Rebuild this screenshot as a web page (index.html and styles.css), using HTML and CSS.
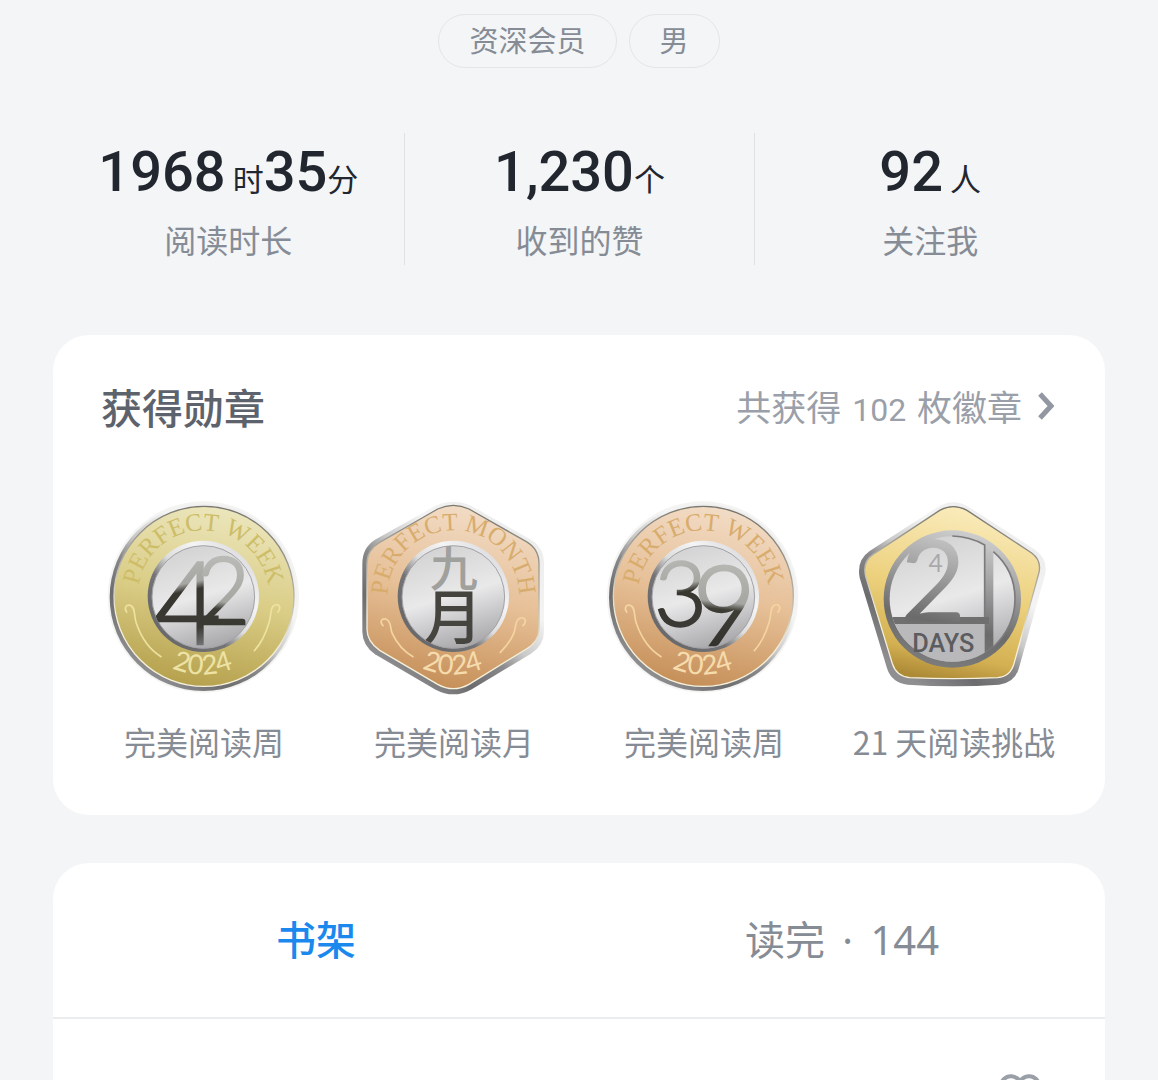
FILE: index.html
```html
<!DOCTYPE html>
<html lang="zh-CN">
<head>
    <meta charset="UTF-8">
    <meta name="viewport" content="width=device-width, initial-scale=1.0">
    <title>个人主页</title>
    <link rel="stylesheet" href="styles.css">
</head>
<body>
    <!-- Shared gradients for the medals -->
    <svg class="defs" width="0" height="0" aria-hidden="true">
        <defs>
            <linearGradient id="rim" x1="0.85" y1="0.1" x2="0.2" y2="0.9">
                <stop offset="0" stop-color="#ececec"/>
                <stop offset="0.3" stop-color="#f4f4f4"/>
                <stop offset="0.5" stop-color="#c9c9c9"/>
                <stop offset="0.62" stop-color="#8a8a8c"/>
                <stop offset="0.8" stop-color="#6c6c6e"/>
                <stop offset="1" stop-color="#8f8f91"/>
            </linearGradient>
            <linearGradient id="lip" x1="0.6" y1="0" x2="0.4" y2="1">
                <stop offset="0" stop-color="#77746c"/>
                <stop offset="0.4" stop-color="#b4b1a6"/>
                <stop offset="0.7" stop-color="#f3efd8"/>
                <stop offset="1" stop-color="#f6f2dc"/>
            </linearGradient>
            <linearGradient id="gold" x1="0.6" y1="0" x2="0.4" y2="1">
                <stop offset="0" stop-color="#ece6bd"/>
                <stop offset="0.5" stop-color="#dacd86"/>
                <stop offset="1" stop-color="#b5a04c"/>
            </linearGradient>
            <linearGradient id="copper" x1="0.6" y1="0" x2="0.4" y2="1">
                <stop offset="0" stop-color="#f2dcc6"/>
                <stop offset="0.5" stop-color="#e6bf96"/>
                <stop offset="1" stop-color="#c58e57"/>
            </linearGradient>
            <linearGradient id="amber" x1="0.6" y1="0" x2="0.4" y2="1">
                <stop offset="0" stop-color="#faecbd"/>
                <stop offset="0.5" stop-color="#ecd07c"/>
                <stop offset="0.85" stop-color="#d3b052"/>
                <stop offset="1" stop-color="#ad8a36"/>
            </linearGradient>
            <linearGradient id="innerRim" x1="0.9" y1="0.1" x2="0.2" y2="0.8">
                <stop offset="0" stop-color="#d9d9dc"/>
                <stop offset="0.3" stop-color="#f5f5f5"/>
                <stop offset="0.55" stop-color="#dedede"/>
                <stop offset="0.75" stop-color="#747476"/>
                <stop offset="1" stop-color="#6a6a6c"/>
            </linearGradient>
            <linearGradient id="silver" x1="0.3" y1="0" x2="0.6" y2="1">
                <stop offset="0" stop-color="#d2d2d3"/>
                <stop offset="0.5" stop-color="#e9e9ea"/>
                <stop offset="1" stop-color="#a7a7aa"/>
            </linearGradient>
            <linearGradient id="steel" gradientUnits="userSpaceOnUse" x1="400" y1="140" x2="300" y2="540">
                <stop offset="0" stop-color="#cfcfd0"/>
                <stop offset="0.35" stop-color="#a0a0a1"/>
                <stop offset="0.7" stop-color="#6b6b6c"/>
                <stop offset="1" stop-color="#7b7b7c"/>
            </linearGradient>
            <linearGradient id="ink" gradientUnits="userSpaceOnUse" x1="300" y1="200" x2="360" y2="480">
                <stop offset="0" stop-color="#b9b9b6"/>
                <stop offset="0.32" stop-color="#a6a6a2"/>
                <stop offset="0.4" stop-color="#37362f"/>
                <stop offset="0.8" stop-color="#3b3a35"/>
                <stop offset="1" stop-color="#77777a"/>
            </linearGradient>
            <linearGradient id="inkLight" gradientUnits="userSpaceOnUse" x1="420" y1="200" x2="390" y2="480">
                <stop offset="0" stop-color="#bcbcb8"/>
                <stop offset="0.54" stop-color="#a5a5a1"/>
                <stop offset="0.62" stop-color="#3d3c35"/>
                <stop offset="1" stop-color="#33322d"/>
            </linearGradient>
            <path id="arcTop" d="M160 406 A197 197 0 1 1 526 406"/>
            <path id="arcBottom" d="M108 370 A236 236 0 0 0 574 370"/>
            <clipPath id="disc"><circle cx="343" cy="336" r="154"/></clipPath>
            <clipPath id="dayDisc"><circle cx="340" cy="342" r="188"/></clipPath>
            <g id="core">
                <circle cx="343" cy="334" r="167" fill="url(#innerRim)"/>
                <circle cx="343" cy="336" r="154" fill="url(#silver)" stroke="#a2a2a8" stroke-width="3"/>
            </g>
            <g id="scroll" fill="none" stroke-width="5" stroke-linecap="round">
                <path d="M113 381 C104 368 112 358 124 361 C140 366 134 392 142 415 C156 456 178 492 216 515"/>
                <path d="M567 381 C578 368 570 356 558 360 C542 365 548 390 540 413 C530 447 516 475 496 497"/>
            </g>
        </defs>
    </svg>

    <main class="page">
        <div class="tags">
            <span class="tag">资深会员</span>
            <span class="tag">男</span>
        </div>

        <section class="stats">
            <div class="stat">
                <p class="stat-value">1968<span class="unit spaced">时</span>35<span class="unit">分</span></p>
                <p class="stat-label">阅读时长</p>
            </div>
            <div class="stat">
                <p class="stat-value">1,230<span class="unit">个</span></p>
                <p class="stat-label">收到的赞</p>
            </div>
            <div class="stat">
                <p class="stat-value">92<span class="unit spaced">人</span></p>
                <p class="stat-label">关注我</p>
            </div>
        </section>

        <section class="card medals">
            <div class="card-header">
                <h2>获得勋章</h2>
                <a class="more" href="#medals">
                    <span>共获得 <span class="count">102</span> 枚徽章</span>
                    <svg class="chevron" viewBox="0 0 16 28" aria-hidden="true"><path d="M2 2 L13 14 L2 26"/></svg>
                </a>
            </div>
            <ul class="medal-list" id="medals">
                <li>
                    <svg class="medal" viewBox="0 0 690 675">
                        <circle cx="343" cy="336" r="287" fill="#f4f4f3"/>
                        <circle cx="343" cy="337" r="281" fill="url(#rim)"/>
                        <circle cx="345" cy="334" r="270" fill="url(#gold)" stroke="url(#lip)" stroke-width="4"/>
                        <text class="legend gold-text"><textPath href="#arcTop" startOffset="50%">PERFECT WEEK</textPath></text>
                        <use href="#scroll" stroke="#ede29f"/>
                        <text class="year" fill="#eee3a4"><textPath href="#arcBottom" startOffset="50%">2024</textPath></text>
                        <use href="#core"/>
                        <g clip-path="url(#disc)" class="numeral">
                            <text x="196" y="476" font-size="346" fill="url(#ink)" stroke="url(#ink)">4</text>
                            <text x="322" y="416" font-size="280" fill="url(#inkLight)" stroke="url(#inkLight)">2</text>
                        </g>
                    </svg>
                    <span>完美阅读周</span>
                </li>
                <li>
                    <svg class="medal" viewBox="0 0 690 675">
                        <path d="M290 62 Q343 38 396 62 L576 164 Q615 188 615 236 L615 440 Q615 480 576 506 L396 614 Q343 642 290 614 L108 508 Q70 480 70 440 L70 236 Q70 188 108 164 Z" fill="url(#rim)"/>
                        <path d="M296 72 Q343 50 390 72 L562 170 Q600 192 600 236 L600 432 Q600 470 562 492 L390 598 Q343 624 296 598 L122 496 Q84 470 84 432 L84 236 Q84 194 122 172 Z" fill="url(#copper)" stroke="url(#lip)" stroke-width="4"/>
                        <text class="legend copper-text"><textPath href="#arcTop" startOffset="50%">PERFECT MONTH</textPath></text>
                        <g stroke="#f4d5a2" fill="none" stroke-width="5" stroke-linecap="round">
                            <path d="M132 422 C120 408 130 398 142 403 C158 410 152 428 160 446 C174 476 195 500 222 515"/>
                            <path d="M552 422 C566 408 556 394 542 400 C526 408 532 428 524 446 C514 470 500 486 484 502"/>
                        </g>
                        <text class="year" fill="#f6dcac"><textPath href="#arcBottom" startOffset="50%">2024</textPath></text>
                        <use href="#core"/>
                        <g clip-path="url(#disc)" class="hanzi">
                            <text x="344" y="302" font-size="144" fill="#a0a09d">九</text>
                            <text x="342" y="462" font-size="176" fill="#45443f">月</text>
                        </g>
                    </svg>
                    <span>完美阅读月</span>
                </li>
                <li>
                    <svg class="medal" viewBox="0 0 690 675">
                        <circle cx="341" cy="336" r="287" fill="#f4f4f3"/>
                        <circle cx="341" cy="337" r="281" fill="url(#rim)"/>
                        <circle cx="343" cy="334" r="270" fill="url(#copper)" stroke="url(#lip)" stroke-width="4"/>
                        <text class="legend copper-text"><textPath href="#arcTop" startOffset="50%">PERFECT WEEK</textPath></text>
                        <use href="#scroll" stroke="#f4d5a2"/>
                        <text class="year" fill="#f6dcac"><textPath href="#arcBottom" startOffset="50%">2024</textPath></text>
                        <use href="#core"/>
                        <g clip-path="url(#disc)" class="numeral">
                            <text x="196" y="424" font-size="272" fill="url(#ink)" stroke="url(#ink)">3</text>
                            <text x="310" y="480" font-size="331" fill="url(#inkLight)" stroke="url(#inkLight)">9</text>
                        </g>
                    </svg>
                    <span>完美阅读周</span>
                </li>
                <li>
                    <svg class="medal" viewBox="0 0 690 675">
                        <path d="M296 66 Q343 38 390 66 L590 196 Q628 224 618 270 L540 548 Q528 594 480 599 Q343 608 206 599 Q158 594 144 550 L62 278 Q52 226 92 198 Z" fill="url(#rim)"/>
                        <path d="M302 76 Q343 54 384 76 L578 204 Q608 226 600 262 L526 532 Q516 574 476 578 Q343 584 212 578 Q172 574 160 536 L80 274 Q70 230 102 208 Z" fill="url(#amber)" stroke="url(#lip)" stroke-width="4"/>
                        <circle cx="340" cy="342" r="206" fill="url(#steel)"/>
                        <circle cx="340" cy="342" r="188" fill="url(#silver)"/>
                        <!-- Frame that carries the day count -->
                        <g clip-path="url(#dayDisc)">
                            <rect x="150" y="416" width="288" height="130" fill="#b9b9bb"/>
                            <rect x="437" y="150" width="26" height="390" fill="url(#steel)"/>
                            <rect x="150" y="396" width="300" height="21" fill="#6f6f70"/>
                        </g>
                        <g fill="none" stroke="#7b7b7d" stroke-width="5">
                            <path d="M340 153 Q392 154 437 180 V396"/>
                            <path d="M463 200 Q528 256 528 342 Q528 424 463 486"/>
                        </g>
                        <text class="two" x="182" y="412" font-size="344" fill="url(#steel)">2</text>
                        <text class="small-four" x="290" y="260">4</text>
                        <text class="days" x="313" y="500">DAYS</text>
                    </svg>
                    <span>21 天阅读挑战</span>
                </li>
            </ul>
        </section>

        <section class="card shelf">
            <div class="tabs">
                <button type="button" class="tab active">书架</button>
                <button type="button" class="tab">读完 <span class="dot">·</span> 144</button>
            </div>
            <div class="shelf-body">
                <svg class="heart" viewBox="0 0 44 40" aria-hidden="true"><path d="M22 7 C17 1 10 1 6 5 C1 10 1 17 6 22 L22 37 L38 22 C43 17 43 10 38 5 C34 1 27 1 22 7 Z"/></svg>
            </div>
        </section>
    </main>
</body>
</html>
```

FILE: styles.css
```css
* {
    box-sizing: border-box;
}
body {
    margin: 0;
    background: #f3f5f7;
    color: #868c95;
    font-family: "Noto Sans CJK SC", sans-serif;
}
h2, p, ul {
    margin: 0;
    padding: 0;
}
.defs {
    position: absolute;
}
.page {
    display: flex;
    flex-direction: column;
    height: 100vh;
    padding: 14px 53px 0;
    overflow: hidden;
}

/* Tags */
.tags {
    display: flex;
    justify-content: center;
    gap: 12px;
}
.tag {
    padding: 0 30px 4px;
    border: 1px solid #e3e5e8;
    border-radius: 27px;
    font-size: 29px;
    line-height: 48px;
}

/* Reading stats */
.stats {
    display: grid;
    grid-template-columns: repeat(3, 1fr);
    margin-top: 65px;
}
.stat {
    height: 132px;
    padding-top: 7px;
    text-align: center;
}
.stat + .stat {
    border-left: 1px solid #dfe1e4;
}
.stat-value {
    color: #22262f;
    font-family: Roboto, "Noto Sans CJK SC", sans-serif;
    font-size: 56px;
    font-weight: 500;
    line-height: 64px;
    white-space: nowrap;
}
.unit {
    font-family: "Noto Sans CJK SC", sans-serif;
    font-size: 31px;
    font-weight: 400;
    line-height: 32px;
}
.spaced {
    margin-left: 7px;
}
.stat-label {
    margin-top: 11px;
    font-size: 32px;
    line-height: 48px;
}

/* Cards */
.card {
    background: #fff;
    border-radius: 36px;
}
.medals {
    margin-top: 70px;
    padding: 43px 26px 50px;
}
.card-header {
    display: flex;
    justify-content: space-between;
    align-items: center;
    padding: 0 25px 0 22px;
}
.card-header h2 {
    color: #5d636d;
    font-size: 41px;
    font-weight: 500;
    line-height: 56px;
}
.more {
    display: flex;
    align-items: center;
    gap: 16px;
    color: #9a9fa9;
    font-size: 35px;
    line-height: 56px;
    text-decoration: none;
}
.count {
    margin: 0 3px;
    font-family: Roboto, sans-serif;
    font-size: 32px;
    line-height: 32px;
}
.chevron {
    width: 16px;
    height: 28px;
    fill: none;
    stroke: #9297a2;
    stroke-width: 5;
}

/* Medals */
.medal-list {
    display: grid;
    grid-template-columns: repeat(4, 1fr);
    margin-top: 51px;
    list-style: none;
}
.medal-list li {
    display: flex;
    flex-direction: column;
    align-items: center;
    font-size: 32px;
    line-height: 48px;
    white-space: nowrap;
}
.medal {
    width: 230px;
    height: 225px;
    margin-bottom: 7px;
}
.legend {
    font-family: "Liberation Serif", serif;
    font-size: 75px;
    text-anchor: middle;
}
.gold-text {
    fill: #cdbd68;
}
.copper-text {
    fill: #d8ac6c;
}
.year {
    font-family: Lato, sans-serif;
    font-size: 82px;
    font-weight: 400;
    text-anchor: middle;
}
.numeral, .two {
    font-family: Lato, sans-serif;
}
.numeral {
    font-weight: 300;
    stroke-width: 7px;
}
.hanzi {
    font-weight: 500;
    text-anchor: middle;
}
.small-four {
    fill: #a9a9ab;
    font-family: Lato, sans-serif;
    font-size: 74px;
    text-anchor: middle;
}
.days {
    fill: #5c5c5f;
    font-family: Roboto, sans-serif;
    font-size: 76px;
    font-weight: 500;
    text-anchor: middle;
}

/* Book shelf */
.shelf {
    flex: 1;
    margin-top: 48px;
}
.tabs {
    display: grid;
    grid-template-columns: 1fr 1fr;
    border-bottom: 2px solid #ebecee;
}
.tab {
    padding: 0;
    border: none;
    background: none;
    color: #868c95;
    font-family: "Noto Sans", "Noto Sans CJK SC", sans-serif;
    font-size: 40px;
    line-height: 154px;
    cursor: pointer;
}
.active {
    color: #1b88ee;
    font-weight: 500;
}
.dot {
    margin: 0 7px;
}
.shelf-body {
    display: flex;
    justify-content: flex-end;
    padding: 55px 63px 0;
}
.heart {
    width: 44px;
    height: 40px;
    fill: none;
    stroke: #9a9fa8;
    stroke-width: 4;
}
```
